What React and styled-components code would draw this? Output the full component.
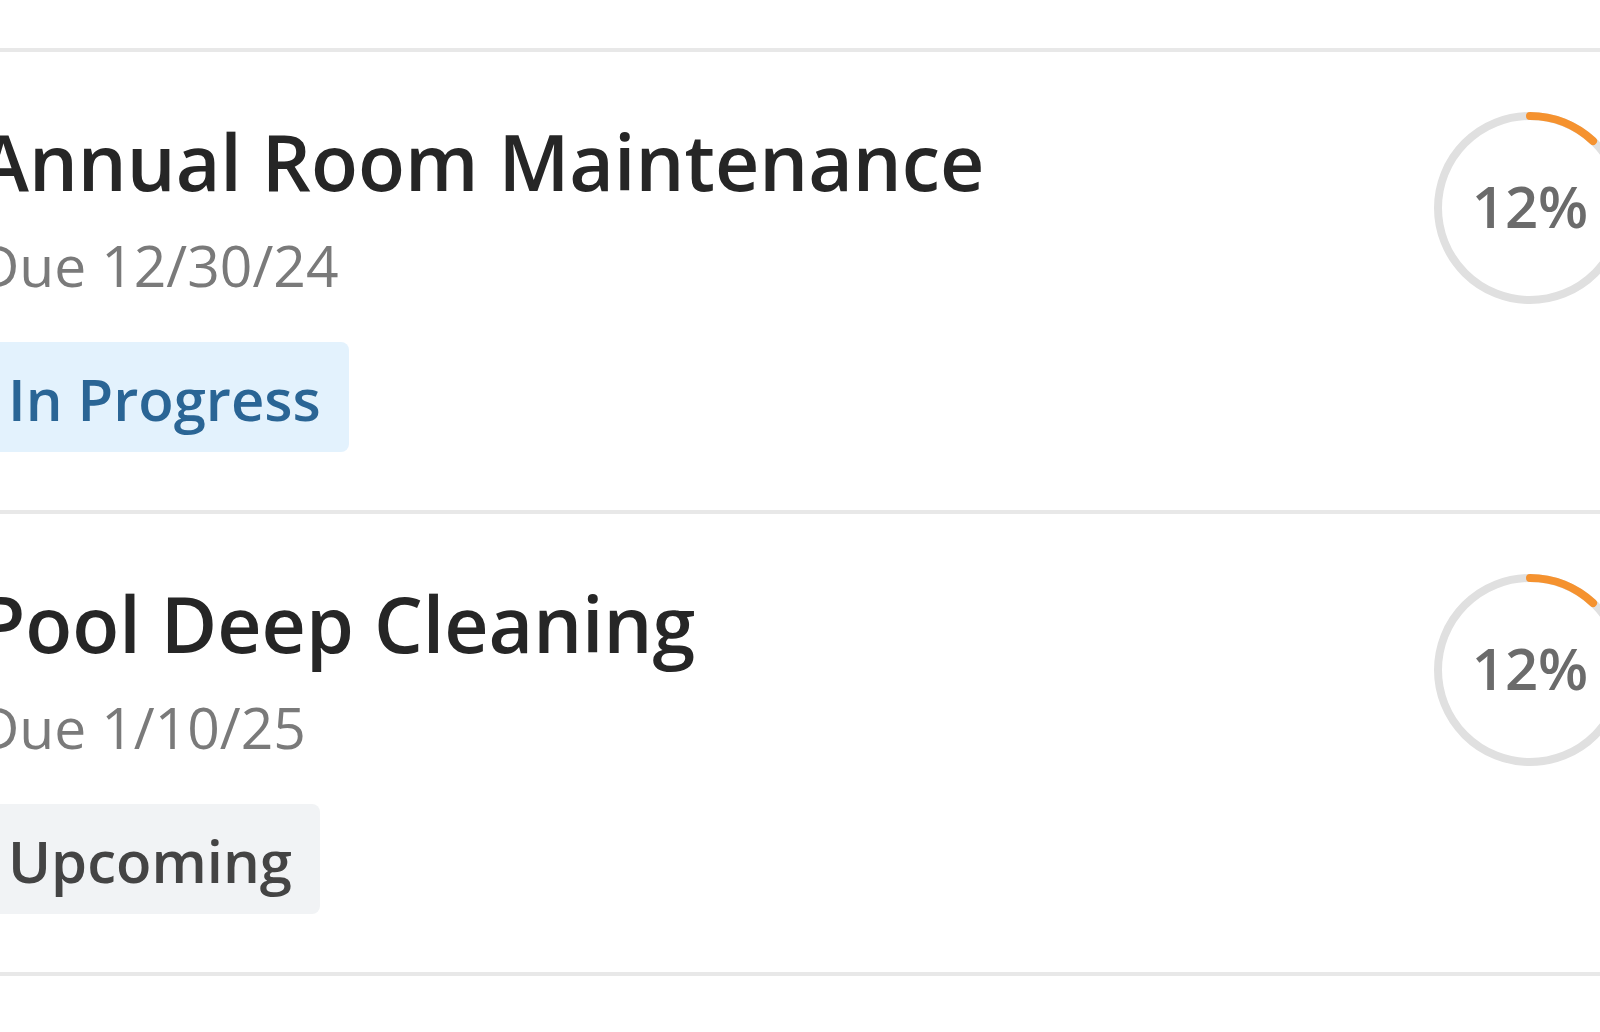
import React from 'react';
import styled, { createGlobalStyle } from 'styled-components';

const GlobalStyle = createGlobalStyle`
  html, body {
    margin: 0;
    padding: 0;
    background: #fff;
    font-family: "Open Sans", "Noto Sans", sans-serif;
  }
`;

const Page = styled.div`
  width: 1600px;
  height: 1032px;
  overflow: hidden;
  background: #fff;
  padding-top: 48px;
  box-sizing: border-box;
`;

const TaskList = styled.div`
  margin-left: -22px;
  width: 1680px;
  border-top: 4px solid #e8e8e8;
`;

const TaskCard = styled.div`
  display: flex;
  justify-content: space-between;
  align-items: flex-start;
  height: 462px;
  box-sizing: border-box;
  padding: 57px 32px 0 0;
  border-bottom: 4px solid #e8e8e8;
`;

const Info = styled.div`
  display: flex;
  flex-direction: column;
  align-items: flex-start;
`;

const Title = styled.div`
  font-size: 77px;
  font-weight: 600;
  color: #262626;
  line-height: normal;
`;

const DueDate = styled.div`
  margin-top: 12px;
  font-size: 57px;
  color: #7a7a7a;
  line-height: normal;
`;

const StatusBadge = styled.span`
  margin-top: 38px;
  padding: 17px 28px 14px 30px;
  border-radius: 8px;
  font-size: 58px;
  font-weight: 600;
  line-height: normal;
  background: ${props => (props.$status === 'progress' ? '#e3f2fd' : '#f1f3f5')};
  color: ${props => (props.$status === 'progress' ? '#2a6595' : '#444')};
`;

const Ring = styled.div`
  position: relative;
  width: 192px;
  height: 192px;
  margin-top: 3px;
  flex-shrink: 0;
`;

const RingLabel = styled.div`
  position: absolute;
  inset: 0;
  display: flex;
  align-items: center;
  justify-content: center;
  font-size: 58px;
  font-weight: 600;
  color: #6b6b6b;
  padding-bottom: 6px;
`;

const tasks = [
  { name: 'Annual Room Maintenance', due: '12/30/24', status: 'progress', label: 'In Progress', pct: 12 },
  { name: 'Pool Deep Cleaning', due: '1/10/25', status: 'upcoming', label: 'Upcoming', pct: 12 },
];

const ProgressRing = ({ pct }) => {
  const r = 92;
  const c = 2 * Math.PI * r;
  return (
    <Ring>
      <svg width="192" height="192" viewBox="0 0 192 192">
        <circle cx="96" cy="96" r={r} fill="none" stroke="#e0e0e0" strokeWidth="8" />
        <circle
          cx="96"
          cy="96"
          r={r}
          fill="none"
          stroke="#f5922f"
          strokeWidth="8"
          strokeLinecap="round"
          strokeDasharray={`${(c * pct) / 100} ${c}`}
          transform="rotate(-90 96 96)"
        />
      </svg>
      <RingLabel>{pct}%</RingLabel>
    </Ring>
  );
};

const App = () => (
  <>
    <GlobalStyle />
    <Page>
      <TaskList>
        {tasks.map(t => (
          <TaskCard key={t.name}>
            <Info>
              <Title>{t.name}</Title>
              <DueDate>Due {t.due}</DueDate>
              <StatusBadge $status={t.status}>{t.label}</StatusBadge>
            </Info>
            <ProgressRing pct={t.pct} />
          </TaskCard>
        ))}
      </TaskList>
    </Page>
  </>
);

export default App;
